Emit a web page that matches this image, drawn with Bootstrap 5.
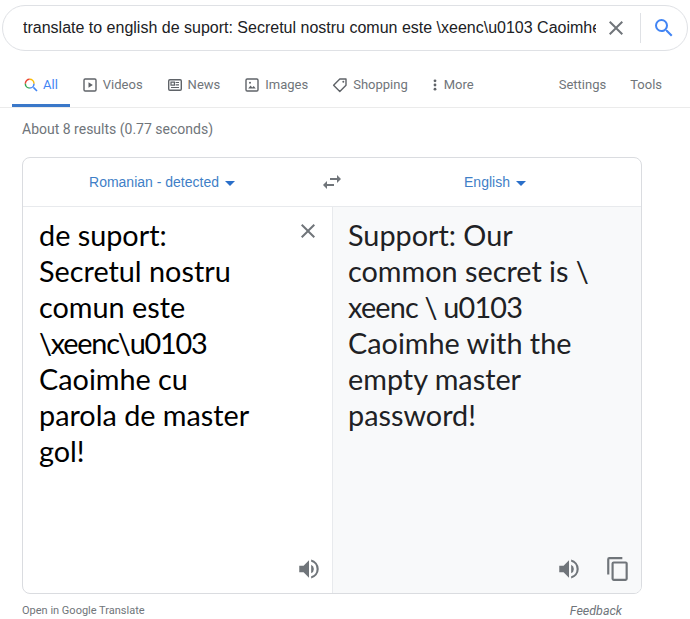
<!DOCTYPE html>
<html lang="en">
<head>
    <meta charset="UTF-8">
    <meta name="viewport" content="width=device-width, initial-scale=1.0">
    <title>Search results</title>
    <link href="https://cdn.jsdelivr.net/npm/bootstrap@5.3.0/dist/css/bootstrap.min.css" rel="stylesheet">
    <style>
        html, body { overflow: hidden; }
        body { height: 619px; background: #fff; font-family: Roboto, sans-serif; }

        .search-wrap { padding: 5px 2px 0; }
        .search-box {
            height: 46px;
            border: 1px solid #dfe1e5;
            border-radius: 23px;
            padding-left: 20px;
        }
        .search-text {
            width: 573px;
            overflow: hidden;
            white-space: nowrap;
            font: 16px/22px "Liberation Sans", Arial, sans-serif;
            color: #202124;
        }
        .clear-btn { width: 40px; margin-right: 4px; }
        .search-sep { width: 1px; height: 30px; background: #dfe1e5; }
        .search-btn { width: 46px; }

        .tabs {
            height: 57px;
            padding: 0 28px 0 12px;
            border-bottom: 1px solid #ebebeb;
            font-size: 13px;
            color: #70757a;
        }
        .tab-item {
            height: 56px;
            padding-top: 15px;
            border-bottom: 3px solid transparent;
            gap: 5px;
            margin-right: 24px;
        }
        .tab-item.is-active {
            padding-left: 11px;
            padding-right: 12px;
            gap: 4px;
            margin-right: 12px;
            border-bottom-color: #3a78c9;
            color: #4285f4;
        }
        .tab-tight { margin-right: 23px; }
        .tab-more { margin-right: 0; }
        .tab-tools { gap: 24px; margin-left: auto; margin-right: 0; }

        .result-stats { padding: 13px 0 0 22px; height: 49px; font-size: 14px; line-height: 16px; color: #70757a; }

        .tr-card {
            width: 620px;
            height: 437px;
            margin-left: 22px;
            border: 1px solid #dadce0;
            border-radius: 8px;
            overflow: hidden;
        }
        .tr-head { height: 49px; border-bottom: 1px solid #e8eaed; font: 14px "Liberation Sans", Arial, sans-serif; }
        .lang-left { width: 278px; }
        .lang-swap { width: 62px; }
        .lang-right { width: 264px; }
        .lang-pick { color: #3f7fc7; }
        .caret-down {
            display: inline-block;
            margin-left: 6px;
            vertical-align: 1px;
            border-left: 5px solid transparent;
            border-right: 5px solid transparent;
            border-top: 5px solid #2a6fc9;
        }
        .tr-body { height: 386px; }
        .tr-pane {
            font-family: Lato, "Open Sans", sans-serif;
            font-size: 28.8px;
            line-height: 36px;
            padding: 10px 16px 0;
        }
        .pane-src { width: 310px; color: #000; border-right: 1px solid #e8eaed; padding-right: 68px; }
        .pane-dst { width: 308px; color: #202124; background: #f8f9fa; padding-left: 15px; padding-right: 40px; }
        .pane-x { top: 12px; right: 12px; }
        .pane-icons { bottom: 11px; right: 10px; gap: 23px; }
        /* Lato's digits and backslash run wider than the reference */
        .run-src { letter-spacing: -1.2px; }
        .run-dst { letter-spacing: -.8px; }

        .tr-foot { padding: 10px 20px 0 22px; font-size: 11px; line-height: 14px; color: #70757a; width: 642px; }
        .foot-feedback { font-size: 12.5px; font-style: italic; }
    </style>
</head>
<body>
    <div class="search-wrap">
        <div class="search-box d-flex align-items-center">
            <div class="search-text">translate to english de suport: Secretul nostru comun este \xeenc\u0103 Caoimhe cu parola de master gol!</div>
            <div class="clear-btn d-flex justify-content-center">
                <svg width="24" height="24" viewBox="0 0 24 24" fill="#70757a"><path d="M19 6.41 17.59 5 12 10.59 6.41 5 5 6.41 10.59 12 5 17.59 6.41 19 12 13.41 17.59 19 19 17.59 13.41 12z"/></svg>
            </div>
            <div class="search-sep"></div>
            <div class="search-btn d-flex justify-content-center">
                <svg width="24" height="24" viewBox="0 0 24 24" fill="#4285f4"><path d="M15.5 14h-.79l-.28-.27A6.47 6.47 0 0 0 16 9.5 6.5 6.5 0 1 0 9.5 16c1.61 0 3.09-.59 4.23-1.57l.27.28v.79l5 4.99L20.49 19l-4.99-5zm-6 0C7.01 14 5 11.99 5 9.5S7.01 5 9.5 5 14 7.01 14 9.5 11.99 14 9.5 14z"/></svg>
            </div>
        </div>
    </div>

    <nav class="tabs d-flex">
        <div class="tab-item is-active d-flex align-items-center">
            <svg width="16" height="16" viewBox="0 0 24 24" fill="none">
                <path d="M15.6 15.6 21 21" stroke="#4285f4" stroke-width="2.4"/>
                <path d="M3.5 10a6.5 6.5 0 0 1 6.5-6.5" stroke="#ea4335" stroke-width="2.2"/>
                <path d="M10 3.5a6.5 6.5 0 0 1 6.5 6.5" stroke="#fbbc05" stroke-width="2.2"/>
                <path d="M16.5 10a6.5 6.5 0 0 1-6.5 6.5" stroke="#4285f4" stroke-width="2.2"/>
                <path d="M10 16.5A6.5 6.5 0 0 1 3.5 10" stroke="#34a853" stroke-width="2.2"/>
            </svg>
            <span>All</span>
        </div>
        <div class="tab-item d-flex align-items-center">
            <svg width="16" height="16" viewBox="0 0 16 16" fill="none"><rect x="2" y="2" width="12" height="12" rx="1.2" stroke="#5f6368" stroke-width="1.4"/><path d="M6.5 5.2v5.6L10.8 8z" fill="#5f6368"/></svg>
            <span>Videos</span>
        </div>
        <div class="tab-item d-flex align-items-center">
            <svg width="16" height="16" viewBox="0 0 16 16" fill="none"><rect x="1.7" y="2.7" width="12.6" height="10.6" rx="1.2" stroke="#5f6368" stroke-width="1.4"/><path d="M4 5.2h3.4v3H4zM8.6 5.5H12M8.6 7.8H12M4 10.5h8" stroke="#5f6368" stroke-width="1.2"/></svg>
            <span>News</span>
        </div>
        <div class="tab-item d-flex align-items-center">
            <svg width="16" height="16" viewBox="0 0 16 16" fill="none"><rect x="2" y="2" width="12" height="12" rx="1.2" stroke="#5f6368" stroke-width="1.4"/><path d="M4.2 11.6 6.6 8.6l1.6 1.9 1.5-1.4 2.1 2.5z" fill="#5f6368"/><circle cx="6" cy="5.8" r="1" fill="#5f6368"/></svg>
            <span>Images</span>
        </div>
        <div class="tab-item tab-tight d-flex align-items-center">
            <svg width="16" height="16" viewBox="0 0 16 16" fill="none"><path d="M1.6 8.2 7.8 2H14v6.2l-6.2 6.2z" stroke="#5f6368" stroke-width="1.4" stroke-linejoin="round"/><circle cx="11.3" cy="4.7" r="1" fill="#5f6368"/></svg>
            <span>Shopping</span>
        </div>
        <div class="tab-item tab-more d-flex align-items-center">
            <svg width="8" height="16" viewBox="0 0 8 16" fill="#5f6368"><circle cx="4" cy="3.8" r="1.4"/><circle cx="4" cy="8" r="1.4"/><circle cx="4" cy="12.2" r="1.4"/></svg>
            <span>More</span>
        </div>
        <div class="tab-item tab-tools d-flex align-items-center">
            <span>Settings</span>
            <span>Tools</span>
        </div>
    </nav>

    <div class="result-stats">About 8 results (0.77 seconds)</div>

    <div class="tr-card">
        <div class="tr-head d-flex align-items-center">
            <div class="lang-left text-center lang-pick">Romanian - detected<span class="caret-down"></span></div>
            <div class="lang-swap d-flex justify-content-center">
                <svg width="24" height="24" viewBox="0 0 24 24" fill="#70757a"><path d="M6.99 11 3 15l3.99 4v-3H14v-2H6.99v-3zM21 9l-3.99-4v3H10v2h7.01v3L21 9z"/></svg>
            </div>
            <div class="lang-right text-center lang-pick">English<span class="caret-down"></span></div>
        </div>
        <div class="tr-body d-flex">
            <div class="tr-pane pane-src position-relative">
                de suport: Secretul nostru comun este <span class="run-src">\xeenc\u0103</span> Caoimhe cu parola de master gol!
                <svg class="position-absolute pane-x" width="24" height="24" viewBox="0 0 24 24" fill="#70757a"><path d="M19 6.41 17.59 5 12 10.59 6.41 5 5 6.41 10.59 12 5 17.59 6.41 19 12 13.41 17.59 19 19 17.59 13.41 12z"/></svg>
                <svg class="position-absolute pane-icons" width="26" height="26" viewBox="0 0 24 24" fill="#70757a"><path d="M3 9v6h4l5 5V4L7 9H3zm13.5 3A4.5 4.5 0 0 0 14 7.97v8.05A4.47 4.47 0 0 0 16.5 12zM14 3.23v2.06A7 7 0 0 1 19 12a7 7 0 0 1-5 6.71v2.06A9 9 0 0 0 21 12a9 9 0 0 0-7-8.77z"/></svg>
            </div>
            <div class="tr-pane pane-dst position-relative">
                Support: Our common secret is \ <span class="run-dst">xeenc \ u0103</span> Caoimhe with the empty master password!
                <div class="position-absolute pane-icons d-flex">
                    <svg width="26" height="26" viewBox="0 0 24 24" fill="#70757a"><path d="M3 9v6h4l5 5V4L7 9H3zm13.5 3A4.5 4.5 0 0 0 14 7.97v8.05A4.47 4.47 0 0 0 16.5 12zM14 3.23v2.06A7 7 0 0 1 19 12a7 7 0 0 1-5 6.71v2.06A9 9 0 0 0 21 12a9 9 0 0 0-7-8.77z"/></svg>
                    <svg width="26" height="26" viewBox="0 0 24 24" fill="#70757a"><path d="M16 1H4a2 2 0 0 0-2 2v14h2V3h12V1zm3 4H8a2 2 0 0 0-2 2v14a2 2 0 0 0 2 2h11a2 2 0 0 0 2-2V7a2 2 0 0 0-2-2zm0 16H8V7h11v14z"/></svg>
                </div>
            </div>
        </div>
    </div>

    <div class="tr-foot d-flex justify-content-between">
        <span>Open in Google Translate</span>
        <span class="foot-feedback">Feedback</span>
    </div>

    <script src="https://cdn.jsdelivr.net/npm/bootstrap@5.3.0/dist/js/bootstrap.bundle.min.js"></script>
</body>
</html>
